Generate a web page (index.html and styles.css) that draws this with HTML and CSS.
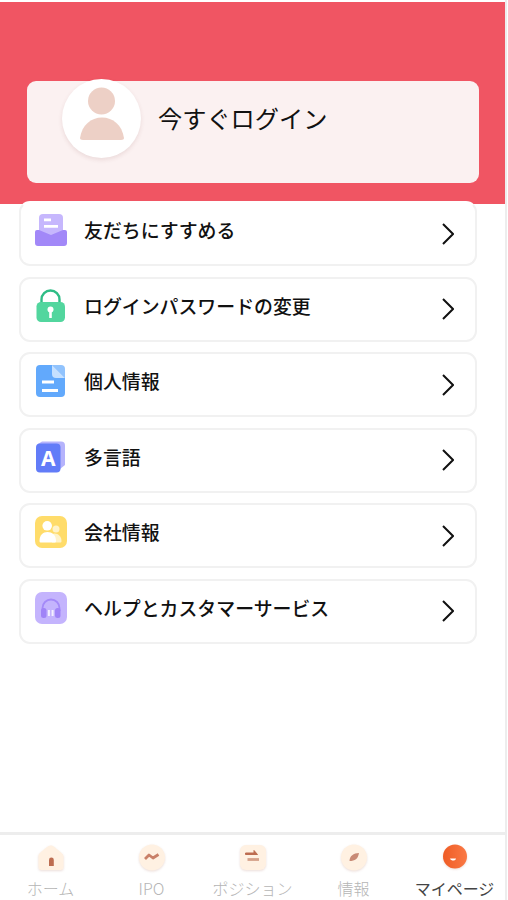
FILE: index.html
```html
<!DOCTYPE html>
<html lang="ja">
<head>
    <meta charset="UTF-8">
    <meta name="viewport" content="width=device-width, initial-scale=1.0">
    <title>マイページ</title>
    <link rel="stylesheet" href="styles.css">
</head>
<body>
    <div class="page">
        <header class="header">
            <a class="login-card">
                <span class="avatar">
                    <svg width="44" height="54" viewBox="0 0 44 54" fill="#edd0c6">
                        <circle cx="21.5" cy="14" r="13.5"/>
                        <path d="M0 51C2 38 11 30.500 22 30.500S42 38 44 51c0 1-1 2-3 2H3c-2 0-3-1-3-2z"/>
                    </svg>
                </span>
                <span class="login-text">今すぐログイン</span>
            </a>
        </header>

        <main class="menu">
            <a class="menu-item">
                <svg class="icon" viewBox="0 0 32 32">
                    <rect x="4" y="0" width="24" height="26" rx="4" fill="#c6b7fd"/>
                    <path d="M9 5.8h7M9 12.4h14" stroke="#fff" stroke-width="2.8"/>
                    <path d="M2 16h2l12 5 12-5h2a2 2 0 0 1 2 2v11a3 3 0 0 1-3 3H3a3 3 0 0 1-3-3V18a2 2 0 0 1 2-2z" fill="#a288f8"/>
                </svg>
                <span class="label">友だちにすすめる</span>
                <svg class="arrow" viewBox="0 0 12 22"><path d="M1 1l10 10L1 21"/></svg>
            </a>
            <a class="menu-item">
                <svg class="icon" viewBox="0 0 32 32">
                    <path d="M6.500 14V9.500a9 9 0 0 1 18 0V14" fill="none" stroke="#2fbd86" stroke-width="2.400"/>
                    <rect x="1.500" y="12" width="28.500" height="20" rx="4.500" fill="#52d69e"/>
                    <circle cx="15.500" cy="19.500" r="3" fill="#fff"/>
                    <path d="M15.500 20v8" stroke="#fff" stroke-width="2.600"/>
                </svg>
                <span class="label">ログインパスワードの変更</span>
                <svg class="arrow" viewBox="0 0 12 22"><path d="M1 1l10 10L1 21"/></svg>
            </a>
            <a class="menu-item">
                <svg class="icon" viewBox="0 0 32 32">
                    <path d="M5 0h13l12 12v16a4 4 0 0 1-4 4H5a4 4 0 0 1-4-4V4a4 4 0 0 1 4-4z" fill="#62a9fc"/>
                    <path d="M17 0h9a4 4 0 0 1 4 4v9z" fill="#91c3fd"/>
                    <path d="M17 0l13 13h-9a4 4 0 0 1-4-4z" fill="#c5e0ff"/>
                    <path d="M7 17h12M7 25.500h16" stroke="#fff" stroke-width="3"/>
                </svg>
                <span class="label">個人情報</span>
                <svg class="arrow" viewBox="0 0 12 22"><path d="M1 1l10 10L1 21"/></svg>
            </a>
            <a class="menu-item">
                <svg class="icon" viewBox="0 0 32 32">
                    <path d="M3 3l4-2.500h19a4 4 0 0 1 4 4V24l-5 4z" fill="#b5b3fc"/>
                    <rect x="1" y="2.500" width="24.500" height="29" rx="4" fill="#627cf8"/>
                    <text class="icon-letter" x="13.200" y="24.800" text-anchor="middle">A</text>
                </svg>
                <span class="label">多言語</span>
                <svg class="arrow" viewBox="0 0 12 22"><path d="M1 1l10 10L1 21"/></svg>
            </a>
            <a class="menu-item">
                <svg class="icon" viewBox="0 0 32 32">
                    <rect width="32" height="32" rx="7" fill="#ffdc6a"/>
                    <circle cx="21" cy="13" r="3.500" fill="#fff3ca"/>
                    <path d="M17 18c5-2 9.500 2 9.500 7 0 1-.5 1.500-1.500 1.500h-8z" fill="#fff3ca"/>
                    <circle cx="12.200" cy="9.800" r="4.800" fill="#fff"/>
                    <path d="M4.500 25c0-6 3.500-9 8-9s8.500 3 8.500 9c0 1-.7 1.500-1.500 1.500H6c-1 0-1.500-.5-1.500-1.500z" fill="#fff"/>
                </svg>
                <span class="label">会社情報</span>
                <svg class="arrow" viewBox="0 0 12 22"><path d="M1 1l10 10L1 21"/></svg>
            </a>
            <a class="menu-item">
                <svg class="icon" viewBox="0 0 32 32">
                    <rect width="32" height="32" rx="7" fill="#c4b4fd"/>
                    <path d="M7.500 19v-3a8.500 8.500 0 0 1 17 0v3" fill="none" stroke="#a48af8" stroke-width="1.800"/>
                    <rect x="6" y="16" width="5.500" height="10" rx="2.500" fill="#a084f7"/>
                    <rect x="20" y="16" width="5.500" height="10" rx="2.500" fill="#a084f7"/>
                    <path d="M13.900 18v6M17.600 18v6" stroke="#f4f0ff" stroke-width="2"/>
                </svg>
                <span class="label">ヘルプとカスタマーサービス</span>
                <svg class="arrow" viewBox="0 0 12 22"><path d="M1 1l10 10L1 21"/></svg>
            </a>
        </main>

        <nav class="tabbar">
            <a class="tab">
                <svg class="tab-icon" viewBox="0 0 28 28">
                    <path d="M14 1.500c2 0 3 1 10 7 2 2 3 3 2.500 5V23c0 2-1 3-3 3h-19c-2 0-3-1-3-3V13C1 11 2 10 4 8c7-6 8-6.500 10-6.500z" fill="#fff1e2"/>
                    <path d="M12 21v-5a2.300 2.300 0 0 1 4.800 0v6H12z" fill="#bd6d50"/>
                </svg>
                <span>ホーム</span>
            </a>
            <a class="tab">
                <svg class="tab-icon" viewBox="0 0 28 28">
                    <circle cx="14" cy="13.500" r="13" fill="#fff1e2"/>
                    <path d="M7 15l4-4 4 3 5.500-3.500" fill="none" stroke="#c98068" stroke-width="2.800" stroke-linejoin="round"/>
                </svg>
                <span>IPO</span>
            </a>
            <a class="tab">
                <svg class="tab-icon" viewBox="0 0 28 28">
                    <rect x="1" y="1" width="26" height="25" rx="6" fill="#fff1e2"/>
                    <path d="M6.500 9H15V6.500l3.500 4h-12z" fill="#bd6d50" stroke="#bd6d50"/>
                    <path d="M8.500 15.500H20" stroke="#d5a18a" stroke-width="2.800"/>
                </svg>
                <span>ポジション</span>
            </a>
            <a class="tab">
                <svg class="tab-icon" viewBox="0 0 28 28">
                    <circle cx="14" cy="13.500" r="13" fill="#fff1e2"/>
                    <path d="M9.500 17c0-5 4-8 9.500-8-1 6-4 8-9.500 8z" fill="#c98a75"/>
                </svg>
                <span>情報</span>
            </a>
            <a class="tab active">
                <svg class="tab-icon" viewBox="0 0 28 28">
                    <defs>
                        <linearGradient id="orange" x1="0" y1="0" x2="1" y2="0">
                            <stop offset="0" stop-color="#ef5c25"/>
                            <stop offset="1" stop-color="#fa7945"/>
                        </linearGradient>
                    </defs>
                    <circle cx="14" cy="12.500" r="12" fill="url(#orange)"/>
                    <path d="M9 14.500h6c-.5 2.800-5 2.800-6 0z" fill="#fff"/>
                </svg>
                <span>マイページ</span>
            </a>
        </nav>
    </div>
</body>
</html>
```

FILE: styles.css
```css
* {
    box-sizing: border-box;
}
body {
    margin: 0;
    background-color: #fff;
    font-family: "Noto Sans CJK JP", sans-serif;
}
.page {
    display: flex;
    flex-direction: column;
    width: 507px;
    height: 900px;
    padding-top: 2px;
    border-right: 2px solid #ededed;
    overflow: hidden;
}
.header {
    height: 202px;
    padding: 79px 26px 0 27px;
    background-color: #f05563;
    flex-shrink: 0;
}
.login-card {
    display: flex;
    height: 102px;
    padding-left: 35px;
    background-color: #fbf1f1;
    border-radius: 9px;
}
.avatar {
    display: flex;
    justify-content: center;
    width: 79px;
    height: 79px;
    margin-top: -2px;
    padding-top: 8px;
    background-color: #fff;
    border-radius: 50%;
    box-shadow: 0 2px 4px rgba(120, 60, 60, 0.12);
}
.login-text {
    margin-left: 17px;
    font-size: 24.2px;
    line-height: 74px;
    color: #111;
}
.menu {
    display: flex;
    flex-direction: column;
    gap: 10.5px;
    flex: 1;
    margin-top: -2.6px;
    padding: 0 28px 0 19px;
}
.menu-item {
    display: flex;
    align-items: flex-start;
    height: 65px;
    padding: 11px 21px 0 14px;
    background-color: #fff;
    border: 2px solid #f1f1f1;
    border-radius: 11px;
}
.menu-item:first-child {
    border-top-color: #fff;
}
.icon {
    width: 32px;
    height: 32px;
    overflow: visible;
}
.icon-letter {
    font-family: "Noto Sans", sans-serif;
    font-size: 21px;
    font-weight: 700;
    fill: #fff;
}
.label {
    flex: 1;
    margin-left: 17px;
    font-size: 18.9px;
    font-weight: 500;
    line-height: 31px;
    color: #111;
}
.arrow {
    width: 12px;
    height: 22px;
    margin-top: 8.5px;
    fill: none;
    stroke: #111;
    stroke-width: 2;
}
.tabbar {
    display: flex;
    height: 68px;
    border-top: 3px solid #ededed;
    flex-shrink: 0;
}
.tab {
    display: flex;
    flex-direction: column;
    align-items: center;
    flex: 1;
    padding-top: 9px;
    font-size: 16px;
    font-weight: 300;
    line-height: 24px;
    color: #b5b5b5;
    white-space: nowrap;
}
.tab-icon {
    width: 28px;
    height: 28px;
    margin-bottom: 4px;
    filter: drop-shadow(0 1px 1px rgba(150, 70, 50, 0.18));
}
.active {
    color: #444;
    font-weight: 400;
}
```
